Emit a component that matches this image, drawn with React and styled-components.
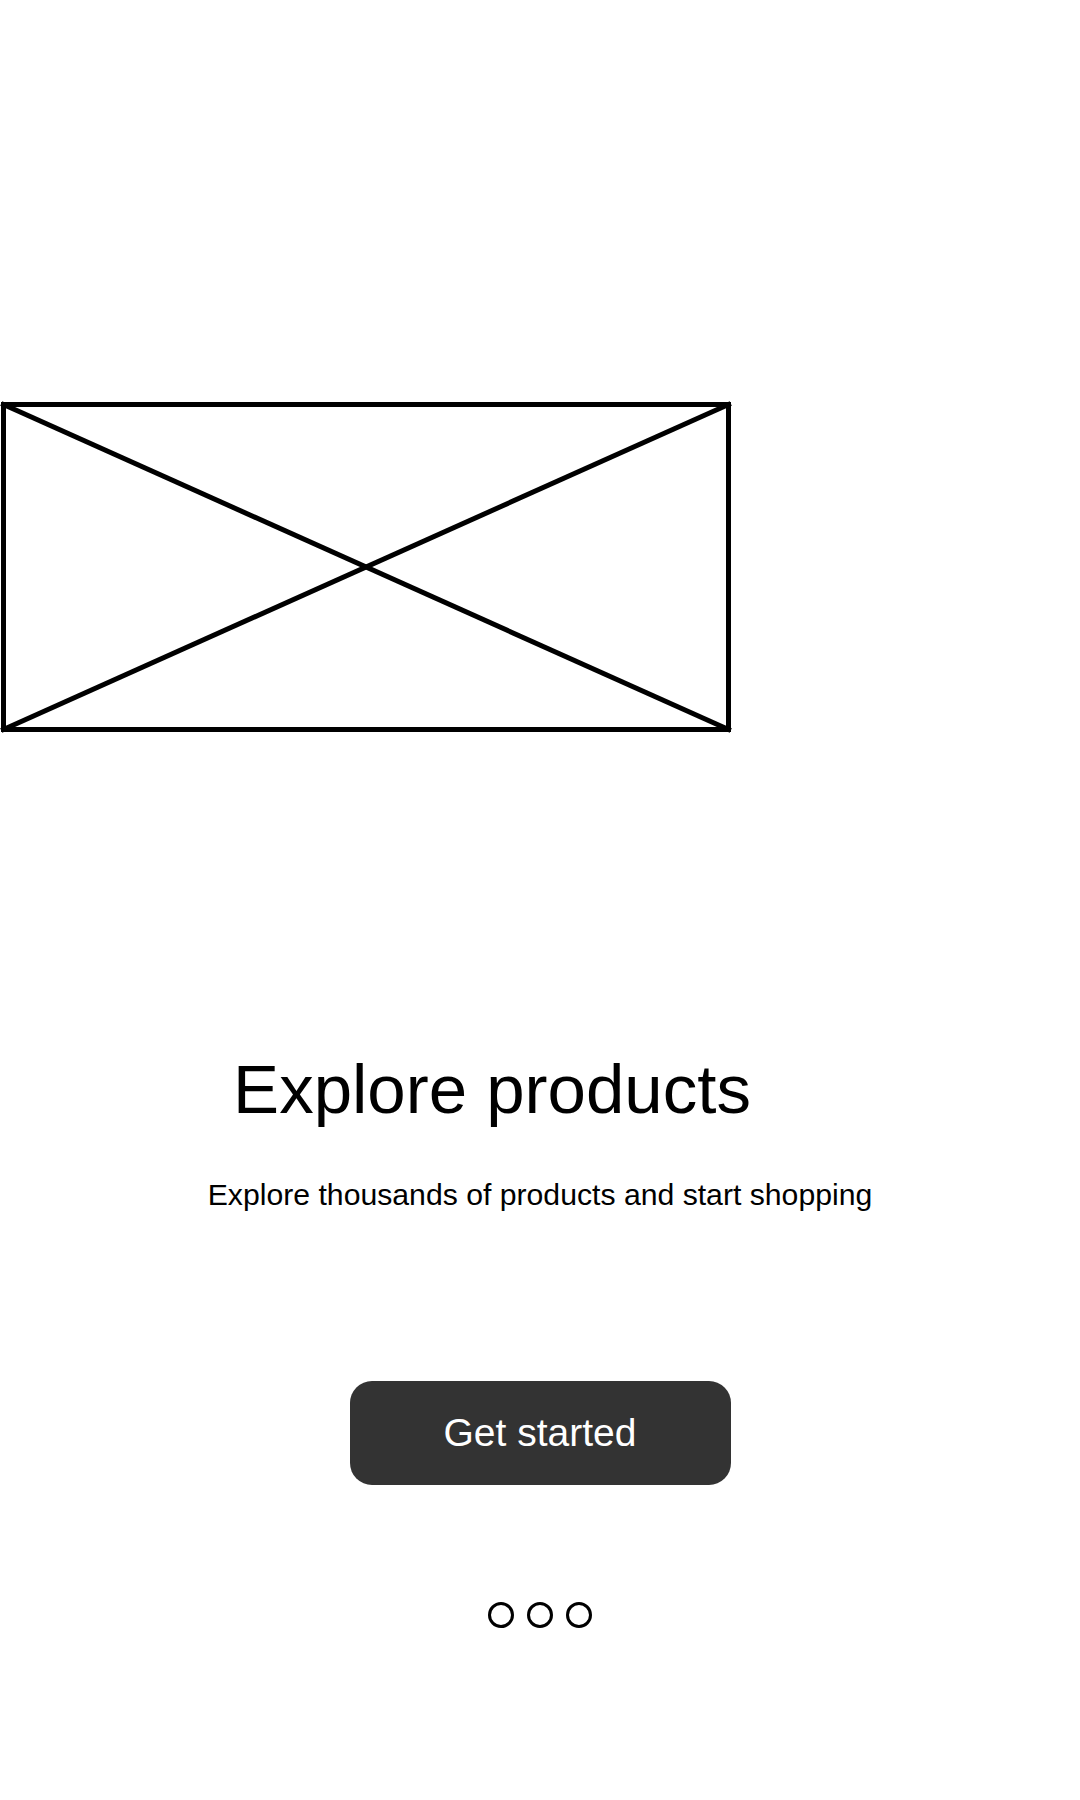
import React, { useState } from "react";
import styled, { createGlobalStyle } from "styled-components";

const GlobalStyle = createGlobalStyle`
  body {
    margin: 0;
    background: #ffffff;
    font-family: "Liberation Sans", Arial, sans-serif;
  }
`;

const Screen = styled.div`
  width: 1080px;
  min-height: 1800px;
  display: flex;
  flex-flow: column nowrap;
  align-items: center;
  background: #ffffff;
`;

const HeroFrame = styled.div`
  align-self: flex-start;
  margin-top: 400px;
  width: 733px;
  height: 334px;
  svg {
    display: block;
  }
`;

const Title = styled.h1`
  margin: 321px 96px 0 0;
  font-size: 69px;
  line-height: 1;
  font-weight: 400;
  color: #000000;
  text-align: center;
`;

const Subtitle = styled.p`
  margin: 56px 0 0;
  font-size: 30.2px;
  line-height: 1;
  color: #000000;
  text-align: center;
`;

const StartButton = styled.button`
  margin-top: 171px;
  width: 381px;
  height: 104px;
  display: flex;
  justify-content: center;
  align-items: center;
  border: none;
  border-radius: 22px;
  background-color: #333333;
  color: #ffffff;
  font-family: "Liberation Sans", Arial, sans-serif;
  font-size: 39px;
  cursor: pointer;
`;

const Pager = styled.div`
  margin-top: 117px;
  display: flex;
  flex-flow: row nowrap;
  gap: 13px;
`;

const Dot = styled.span`
  box-sizing: border-box;
  width: 26px;
  height: 26px;
  border-radius: 50%;
  border: 3px solid #000000;
  background: ${(p) => (p.$active ? "#000000" : "transparent")};
`;

const PlaceholderImage = () => (
  <svg width="733" height="334" viewBox="0 0 733 334">
    <g stroke="#000" strokeWidth="5" fill="none" strokeLinecap="square">
      <rect x="3.5" y="4.5" width="725" height="325" />
      <line x1="3.5" y1="4.5" x2="728.5" y2="329.5" />
      <line x1="728.5" y1="4.5" x2="3.5" y2="329.5" />
    </g>
  </svg>
);

const App = () => {
  const [page] = useState(-1);

  return (
    <Screen>
      <GlobalStyle />
      <HeroFrame>
        <PlaceholderImage />
      </HeroFrame>
      <Title>Explore products</Title>
      <Subtitle>Explore thousands of products and start shopping</Subtitle>
      <StartButton>Get started</StartButton>
      <Pager>
        {[0, 1, 2].map((i) => (
          <Dot key={i} $active={i === page} />
        ))}
      </Pager>
    </Screen>
  );
};

export default App;
